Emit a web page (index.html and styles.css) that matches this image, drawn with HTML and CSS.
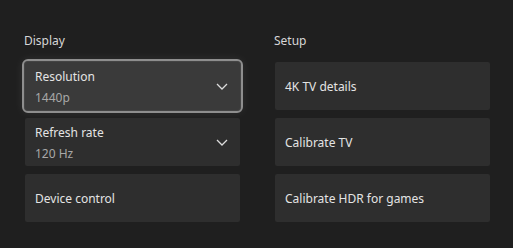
FILE: index.html
```html
<!DOCTYPE html>
<html lang="en">
  <head>
    <meta charset="UTF-8" />
    <title>TV &amp; display options</title>
    <link rel="stylesheet" href="styles.css">
  </head>
  <body>
    <div class="settings">
      <section class="group">
        <h2>Display</h2>
        <div class="tile tile-select focused">
          <div class="tile-text">
            <span class="label">Resolution</span>
            <span class="value">1440p</span>
          </div>
          <svg class="chevron" width="12" height="7" viewBox="0 0 12 7">
            <path d="M1 1 L6 6 L11 1" fill="none" stroke="#dcdcdc" stroke-width="1.3" />
          </svg>
        </div>
        <div class="tile tile-select">
          <div class="tile-text">
            <span class="label">Refresh rate</span>
            <span class="value">120 Hz</span>
          </div>
          <svg class="chevron" width="12" height="7" viewBox="0 0 12 7">
            <path d="M1 1 L6 6 L11 1" fill="none" stroke="#dcdcdc" stroke-width="1.3" />
          </svg>
        </div>
        <div class="tile">
          <span class="label">Device control</span>
        </div>
      </section>

      <section class="group">
        <h2>Setup</h2>
        <div class="tile">
          <span class="label">4K TV details</span>
        </div>
        <div class="tile">
          <span class="label">Calibrate TV</span>
        </div>
        <div class="tile">
          <span class="label">Calibrate HDR for games</span>
        </div>
      </section>
    </div>
  </body>
</html>
```

FILE: styles.css
```css
body {
  margin: 0;
  background: #1f1f1f;
  font-family: "Noto Sans", "Open Sans", sans-serif;
  color: #e2e2e2;
}
.settings {
  display: grid;
  grid-template-columns: 215px 215px;
  column-gap: 35px;
  padding: 33px 0 0 25px;
}
.group {
  display: flex;
  flex-direction: column;
  gap: 8px;
}
.group h2 {
  margin: 0 0 5px -1px;
  font-size: 12px;
  font-weight: normal;
  line-height: 16px;
  color: #d6d6d6;
}
.tile {
  height: 48px;
  box-sizing: border-box;
  padding: 2px 12px 0 10px;
  background: #2e2e2e;
  border-radius: 2px;
  display: flex;
  align-items: center;
  justify-content: space-between;
}
.tile-text {
  display: flex;
  flex-direction: column;
  gap: 5px;
}
.label {
  font-size: 12px;
  line-height: 16px;
  color: #e4e4e4;
}
.value {
  font-size: 12px;
  line-height: 16px;
  color: #a8a8a8;
}
.focused {
  background: #3a3a3a;
  outline: 2px solid #8e8e8e;
  outline-offset: 1px;
  box-shadow: 0 0 0 1px #444, 0 0 10px 3px rgba(255, 255, 255, 0.08);
  border-radius: 3px;
}
.chevron {
  display: block;
  margin-top: -2px;
}
```
